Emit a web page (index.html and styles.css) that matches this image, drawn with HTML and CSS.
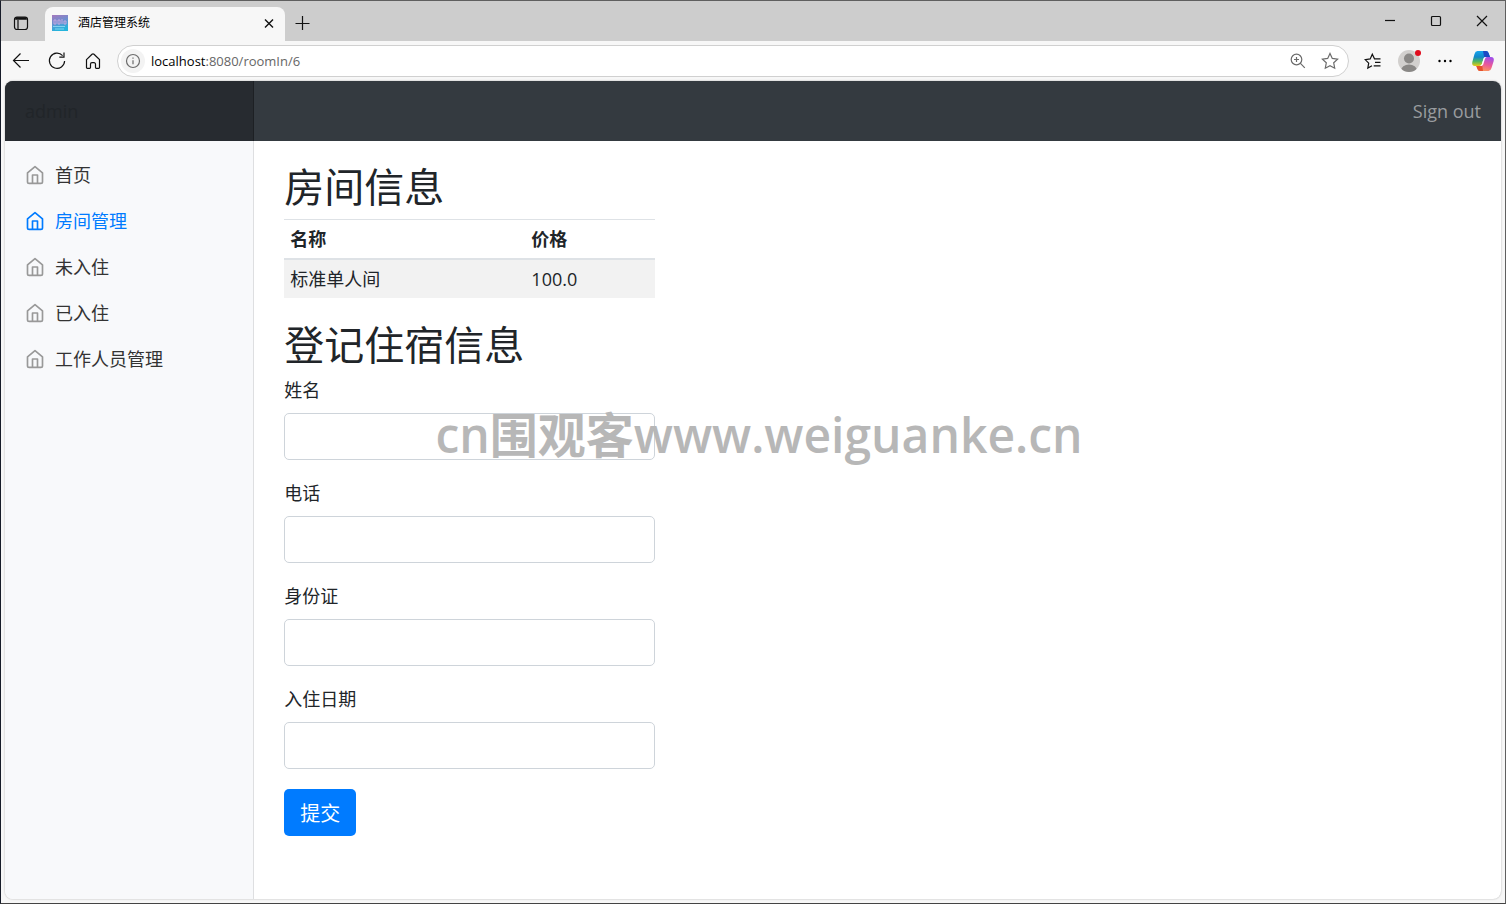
FILE: index.html
```
<!DOCTYPE html>
<html lang="zh-CN">
<head>
    <meta charset="UTF-8">
    <meta name="viewport" content="width=device-width, initial-scale=1.0">
    <title>酒店管理系统</title>
    <link rel="stylesheet" href="styles.css">
</head>
<body>
    <!-- icon shared by the sidebar links -->
    <svg class="sprite" aria-hidden="true">
        <symbol id="home" viewBox="0 0 24 24">
            <path d="M3 9.5l9-7.500 9 7.500V20a2 2 0 0 1-2 2H5a2 2 0 0 1-2-2z"/>
            <path d="M9 22V12h6v10"/>
        </symbol>
    </svg>

    <div class="tab-strip">
        <button class="icon-btn tab-menu" aria-label="Tab actions">
            <svg width="16" height="16" viewBox="0 0 16 16" class="line"><rect x="1.5" y="2" width="13" height="12.5" rx="2.5"/><path d="M1.5 4h13M5 5v9" /><path d="M2.5 3.3h11" stroke-width="2.4"/></svg>
        </button>
        <div class="tab">
            <svg width="16" height="16" viewBox="0 0 16 16">
                <defs>
                    <linearGradient id="fav" x1="0" y1="0" x2="0.3" y2="1">
                        <stop offset="0" stop-color="#a678bd"/>
                        <stop offset="0.5" stop-color="#6b8fd0"/>
                        <stop offset="1" stop-color="#25b4dc"/>
                    </linearGradient>
                </defs>
                <rect width="16" height="16" fill="url(#fav)"/>
                <path d="M2 5h2v4H2zM6 5h2v4H6zM10 4v5M12 6h2v3h-2z" fill="none" stroke="#c4a5df" stroke-width="1"/>
                <path d="M1 11.5h12M3 14h9" stroke="#83d3ef" stroke-width="1"/>
            </svg>
            <span class="tab-title">酒店管理系统</span>
            <button class="icon-btn tab-close" aria-label="Close tab">
                <svg width="16" height="16" viewBox="0 0 16 16" class="line"><path d="M4 4.5l8 8M12 4.5l-8 8" stroke-width="1.4"/></svg>
            </button>
        </div>
        <button class="icon-btn new-tab" aria-label="New tab">
            <svg width="16" height="16" viewBox="0 0 16 16" class="line"><path d="M8.5 1v14M1.5 8.500h14"/></svg>
        </button>
        <div class="window-buttons">
            <button class="icon-btn" aria-label="Minimize"><svg width="12" height="12" viewBox="0 0 12 12" class="line"><path d="M1 5.5h10"/></svg></button>
            <button class="icon-btn" aria-label="Maximize"><svg width="12" height="12" viewBox="0 0 12 12" class="line"><rect x="1.5" y="1.5" width="9" height="9" rx="1"/></svg></button>
            <button class="icon-btn" aria-label="Close"><svg width="12" height="12" viewBox="0 0 12 12" class="line"><path d="M1 1l10 10M11 1L1 11"/></svg></button>
        </div>
    </div>

    <div class="toolbar">
        <button class="icon-btn" aria-label="Back"><svg width="20" height="20" viewBox="0 0 20 20" class="line"><path d="M18 9.5H2.5M9.5 2.5l-7 7 7 7"/></svg></button>
        <button class="icon-btn" aria-label="Refresh"><svg width="20" height="20" viewBox="0 0 20 20" class="line"><path d="M15.6 4.6A7.6 7.6 0 1 0 17.6 10M17 1.5v4.7h-4.7"/></svg></button>
        <button class="icon-btn" aria-label="Home"><svg width="20" height="20" viewBox="0 0 20 20" class="line"><path d="M3.5 8.6L9 3.2a1.5 1.5 0 0 1 2 0l5.5 5.4v7.9a.8.8 0 0 1-.8.8h-2.4a.8.8 0 0 1-.8-.8v-3.3a1.5 1.5 0 0 0-1.5-1.5H9a1.5 1.5 0 0 0-1.5 1.5v3.3a.8.8 0 0 1-.8.8H4.3a.8.8 0 0 1-.8-.8z"/></svg></button>
        <div class="address-bar">
            <span class="site-info"><svg width="16" height="16" viewBox="0 0 16 16" class="line grey"><circle cx="8" cy="8" r="6.5"/><path d="M8 7.2v4M8 4.6v1.2"/></svg></span>
            <span class="url"><b>localhost</b>:8080/roomIn/6</span>
            <button class="icon-btn" aria-label="Zoom"><svg width="16" height="16" viewBox="0 0 16 16" class="line grey"><circle cx="6.5" cy="6.5" r="5.300"/><path d="M10.2 10.2l4.6 4.6M4 6.5h5M6.5 4v5"/></svg></button>
            <button class="icon-btn" aria-label="Add to favourites"><svg width="18" height="18" viewBox="0 0 18 18" class="line grey"><path d="M9 1.5l2.3 4.900 5.300.7-3.900 3.700 1 5.400L9 13.600l-4.700 2.600 1-5.400L1.400 7.100l5.300-.7z"/></svg></button>
        </div>
        <button class="icon-btn" aria-label="Favourites"><svg width="18" height="18" viewBox="0 0 18 18" class="line"><path d="M8 13.800l-4.200 2.300.9-5L1.200 7.600l5-.7L8.300 2.200l2.200 4.600h6M11 10.300h5.500M9.700 13.800h6.800"/></svg></button>
        <button class="icon-btn profile" aria-label="Profile">
            <svg width="24" height="24" viewBox="0 0 24 24">
                <clipPath id="face"><circle cx="12" cy="12" r="11"/></clipPath>
                <circle cx="12" cy="12" r="11" fill="#d2d0ce"/>
                <g clip-path="url(#face)" fill="#8a8886"><circle cx="12" cy="9.500" r="5"/><ellipse cx="12" cy="21.500" rx="8" ry="6"/></g>
                <circle cx="21" cy="4" r="3" fill="#e00b1c"/>
            </svg>
        </button>
        <button class="icon-btn" aria-label="Settings and more"><svg width="16" height="16" viewBox="0 0 16 16"><circle cx="2.500" cy="8" r="1.200"/><circle cx="8" cy="8" r="1.200"/><circle cx="13.500" cy="8" r="1.200"/></svg></button>
        <button class="icon-btn copilot" aria-label="Copilot">
            <svg width="24" height="24" viewBox="0 0 24 24">
                <defs>
                    <linearGradient id="cool" x1="0" y1="0" x2="0" y2="1">
                        <stop offset="0" stop-color="#16a5ed"/>
                        <stop offset="0.4" stop-color="#1287c9"/>
                        <stop offset="0.7" stop-color="#52b860"/>
                        <stop offset="1" stop-color="#ecc912"/>
                    </linearGradient>
                    <linearGradient id="warm" x1="0.6" y1="0" x2="0.3" y2="1">
                        <stop offset="0" stop-color="#a250e8"/>
                        <stop offset="0.5" stop-color="#eb5899"/>
                        <stop offset="1" stop-color="#fb9b58"/>
                    </linearGradient>
                </defs>
                <path d="M6.5 2H15q2 0 2.700 2.200L19 8h-4q-2 0-2.600 2l-1.500 5q-.8 2-2.700 2H4q-3.500 0-2.700-4L3.500 5Q4.300 2 6.500 2z" fill="url(#cool)"/>
                <path d="M12 2h3q2 0 2.700 2.200L19 8h-4q-1 0-1.700.8z" fill="#1b49c4"/>
                <path d="M17.500 22H9q-2 0-2.700-2.200L5.300 17H9q2 0 2.600-2l1.500-5q.8-2 2.700-2H20q3.500 0 2.700 4L20.500 19q-.8 3-3 3z" fill="url(#warm)"/>
                <path d="M5.300 17H9q1.400 0 2.200-1L12 22H9q-2 0-2.700-2.200z" fill="#e5512f"/>
                <path d="M13.300 8.200h2.200q-1.300.6-1.700 2l-1.500 5q-.4 1.400-1.700 1.700H8.800q1.600-.2 2.100-1.900l1.500-5q.2-1.200.9-1.800z" fill="#fff"/>
            </svg>
        </button>
    </div>

    <div class="page">
        <header class="navbar">
            <a class="brand" href="#">admin</a>
            <a class="sign-out" href="#">Sign out</a>
        </header>

        <div class="content">
            <nav class="sidebar">
                <a href="#"><svg class="home"><use href="#home"/></svg>首页</a>
                <a href="#" class="active"><svg class="home"><use href="#home"/></svg>房间管理</a>
                <a href="#"><svg class="home"><use href="#home"/></svg>未入住</a>
                <a href="#"><svg class="home"><use href="#home"/></svg>已入住</a>
                <a href="#"><svg class="home"><use href="#home"/></svg>工作人员管理</a>
            </nav>

            <main>
                <h1>房间信息</h1>
                <table class="room-table">
                    <thead>
                        <tr>
                            <th>名称</th>
                            <th>价格</th>
                        </tr>
                    </thead>
                    <tbody>
                        <tr>
                            <td>标准单人间</td>
                            <td>100.0</td>
                        </tr>
                    </tbody>
                </table>

                <h1>登记住宿信息</h1>
                <form class="guest-form">
                    <div class="form-group">
                        <label for="name">姓名</label>
                        <input type="text" id="name" name="name">
                    </div>
                    <div class="form-group">
                        <label for="phone">电话</label>
                        <input type="text" id="phone" name="phone">
                    </div>
                    <div class="form-group">
                        <label for="idCard">身份证</label>
                        <input type="text" id="idCard" name="idCard">
                    </div>
                    <div class="form-group">
                        <label for="inDate">入住日期</label>
                        <input type="text" id="inDate" name="inDate">
                    </div>
                    <button type="submit" class="btn-primary">提交</button>
                </form>
            </main>
        </div>
    </div>

    <div class="watermark">cn围观客www.weiguanke.cn</div>
</body>
</html>
```
FILE: styles.css
```
* {
    box-sizing: border-box;
}

body {
    margin: 0;
    min-height: 100vh;
    display: flex;
    flex-direction: column;
    position: relative;
    font-family: "Open Sans", "Noto Sans CJK SC", sans-serif;
    font-size: 18px;
    line-height: 26px;
    color: #212529;
    background-color: #f7f7f7;
    border: 1px solid #5f5f5f;
    border-left-color: #171c29;
    border-bottom-color: #444;
}

a {
    text-decoration: none;
}

.sprite {
    position: absolute;
    width: 0;
    height: 0;
}

.line {
    fill: none;
    stroke: #111;
    stroke-width: 1.2;
}

.grey {
    stroke: #6b6b6b;
}

.icon-btn {
    display: flex;
    align-items: center;
    justify-content: center;
    padding: 0;
    border: none;
    background: none;
}

/* Browser tabs */
.tab-strip {
    display: flex;
    height: 40px;
    background-color: #cdcdcd;
}

.tab-menu {
    width: 40px;
    padding-top: 4px;
}

.tab {
    display: flex;
    align-items: center;
    width: 240px;
    margin: 6px 0 0 4px;
    padding: 0 8px 2px 7px;
    border-radius: 8px 8px 0 0;
    background-color: #f7f7f7;
}

.tab-title {
    flex: 1;
    margin-left: 10px;
    font-size: 12px;
    color: #000;
}

.new-tab {
    width: 34px;
    padding-top: 3px;
}

.window-buttons {
    display: flex;
    margin-left: auto;
}

.window-buttons .icon-btn {
    width: 46px;
}

/* Address row */
.toolbar {
    display: flex;
    align-items: center;
    height: 40px;
    padding: 0 2px;
}

.toolbar > .icon-btn {
    width: 36px;
    height: 36px;
}

.toolbar > .copilot {
    width: 40px;
}

.address-bar {
    flex: 1;
    display: flex;
    align-items: center;
    height: 32px;
    margin: 0 6px;
    padding: 0 2px 0 3px;
    border: 1px solid #d0d0d0;
    border-radius: 16px;
    background-color: #fff;
}

.address-bar .icon-btn {
    width: 32px;
    height: 28px;
}

.site-info {
    display: flex;
    align-items: center;
    justify-content: center;
    width: 24px;
    height: 24px;
    border-radius: 50%;
    background-color: #f3f3f3;
}

.url {
    flex: 1;
    margin-left: 6px;
    font-size: 13px;
    color: #666;
}

.url b {
    font-weight: 400;
    color: #000;
}

/* Page */
.page {
    flex: 1;
    display: flex;
    flex-direction: column;
    margin: 0 4px 4px;
    border-radius: 8px;
    overflow: hidden;
    background-color: #fff;
    box-shadow: 0 0 2px rgba(0, 0, 0, 0.3);
}

.navbar {
    display: flex;
    align-items: center;
    justify-content: space-between;
    height: 60px;
    background-color: #343a40;
}

.brand {
    width: 16.6667%;
    padding: 17px 20px;
    font-size: 18px;
    color: #212529;
    background-color: #272b30;
    box-shadow: inset -1px 0 0 #1d2024;
}

.sign-out {
    padding: 0 20px;
    color: #999c9f;
}

.content {
    flex: 1;
    display: flex;
}

.sidebar {
    width: 16.6667%;
    padding-top: 11px;
    background-color: #f8f9fb;
    border-right: 1px solid #dedfe1;
}

.sidebar a {
    display: flex;
    align-items: center;
    gap: 10px;
    padding: 10px 20px;
    color: #333;
}

.home {
    width: 20px;
    height: 20px;
    fill: none;
    stroke: #999;
    stroke-width: 2;
    stroke-linejoin: round;
}

.sidebar .active {
    color: #007bff;
}

.active .home {
    stroke: #007bff;
}

main {
    flex: 1;
    padding: 22px 30px;
}

h1 {
    margin: 0 0 8px;
    font-size: 40px;
    font-weight: 400;
    line-height: 48px;
}

.room-table,
.guest-form {
    width: 31.25%;
}

.room-table {
    margin-bottom: 23px;
    border-collapse: collapse;
    table-layout: fixed;
}

.room-table th,
.room-table td {
    padding: 6px;
    text-align: left;
    border-top: 1px solid #dee2e6;
}

.room-table th:first-child {
    width: 65%;
}

.room-table thead th {
    border-bottom: 2px solid #dee2e6;
}

.room-table tbody tr {
    background-color: #f2f2f2;
}

.form-group {
    margin-bottom: 20px;
}

.form-group label {
    display: block;
    margin-bottom: 10px;
}

.form-group input {
    display: block;
    width: 100%;
    height: 47px;
    padding: 8px 15px;
    font: inherit;
    border: 1px solid #ced4da;
    border-radius: 5px;
}

.btn-primary {
    height: 47px;
    padding: 0 16px;
    font-family: inherit;
    font-size: 20px;
    color: #fff;
    background-color: #007bff;
    border: none;
    border-radius: 5px;
}

.watermark {
    position: absolute;
    top: 404px;
    left: 12px;
    right: 0;
    text-align: center;
    font-size: 48px;
    font-weight: 600;
    line-height: 60px;
    color: #b7b7b7;
    pointer-events: none;
}
```
